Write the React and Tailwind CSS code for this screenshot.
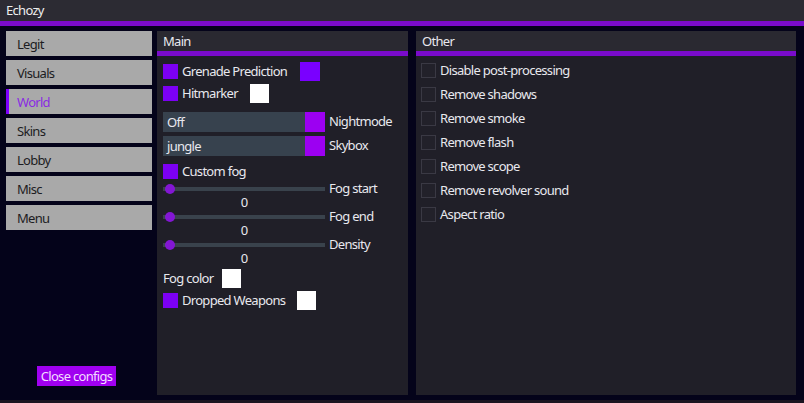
import React from 'react'

const tabs = ['Legit', 'Visuals', 'World', 'Skins', 'Lobby', 'Misc', 'Menu']
const other = [
  'Disable post-processing',
  'Remove shadows',
  'Remove smoke',
  'Remove flash',
  'Remove scope',
  'Remove revolver sound',
  'Aspect ratio',
]

const Check = ({ on }) => (
  <span
    className={`w-[15px] h-[15px] shrink-0 ${on ? 'bg-[#7c00f4]' : 'border border-[#3a3944] bg-[#22212a]'}`}
  />
)

const Swatch = ({ color, className }) => (
  <span className={`w-[19px] h-[19px] shrink-0 ${color} ${className}`} />
)

const Slider = ({ label, top }) => (
  <div className={top}>
    <div className="flex items-center h-[12px]">
      <div className="relative w-[162px] h-[4px] bg-[#39424c]">
        <span className="absolute left-[2px] top-[-3px] w-[10px] h-[10px] rounded-full bg-[#8316d4]" />
      </div>
      <span className="ml-[4px]">{label}</span>
    </div>
    <div className="w-[162px] text-center leading-[14px]">0</div>
  </div>
)

const Combo = ({ value, label, top }) => (
  <div className={`flex items-center h-[20px] ${top}`}>
    <div className="w-[142px] h-full bg-[#37424e] pl-[4px] leading-[20px]">{value}</div>
    <span className="w-[20px] h-full bg-[#9c00f2]" />
    <span className="ml-[4px]">{label}</span>
  </div>
)

const App = () => {
  return (
    <div
      className="w-[804px] h-[403px] bg-[#1a1420] text-[13px] tracking-[-0.7px] text-[#e8e8ee] overflow-hidden whitespace-nowrap"
      style={{ fontFamily: '"Noto Sans", "Open Sans", sans-serif' }}
    >
      {/* title */}
      <div className="h-[21px] bg-[#2c2b33] px-[6px] leading-[21px] text-[#eeeeee]">Echozy</div>
      <div className="h-[5px] bg-[#7a0bcc]" />

      <div className="h-[374px] bg-[#04031a] flex pl-[6px] pr-[8px] py-[5px]">
        {/* sidebar */}
        <div className="w-[146px] flex flex-col gap-[4px]">
          {tabs.map((t) => (
            <div
              key={t}
              className={`h-[25px] bg-[#a9a9a9] leading-[27px] flex ${t === 'World' ? 'text-[#8a2be2]' : 'text-[#1c1c22]'}`}
            >
              {t === 'World' ? (
                <>
                  <span className="w-[3px] h-full bg-[#8000ff]" />
                  <span className="pl-[8px]">{t}</span>
                </>
              ) : (
                <span className="pl-[11px]">{t}</span>
              )}
            </div>
          ))}
          <div className="mt-auto mb-[9px] ml-[31px] w-[79px] h-[20px] bg-[#a000f0] text-[#f3dcff] leading-[20px] text-center">
            Close configs
          </div>
        </div>

        {/* main panel */}
        <div className="ml-[5px] w-[251px] h-full bg-[#201f28] flex flex-col">
          <div className="h-[20px] bg-[#2a2931] pl-[6px] leading-[20px]">Main</div>
          <div className="h-[5px] bg-[#7a0bcc]" />
          <div className="px-[6px]">
            <div className="flex items-center h-[19px] mt-[6px]">
              <Check on />
              <span className="ml-[4px] w-[118px]">Grenade Prediction</span>
              <Swatch color="bg-[#7a00ff]" className="w-[20px]" />
            </div>
            <div className="flex items-center h-[19px] mt-[3px]">
              <Check on />
              <span className="ml-[4px] w-[68px]">Hitmarker</span>
              <Swatch color="bg-white" />
            </div>
            <Combo value="Off" label="Nightmode" top="mt-[9px]" />
            <Combo value="jungle" label="Skybox" top="mt-[4px]" />
            <div className="flex items-center h-[15px] mt-[8px]">
              <Check on />
              <span className="ml-[4px]">Custom fog</span>
            </div>
            <Slider label="Fog start" top="mt-[4px]" />
            <Slider label="Fog end" top="mt-[2px]" />
            <Slider label="Density" top="mt-[2px]" />
            <div className="flex items-center h-[19px] mt-[4px]">
              <span className="w-[59px]">Fog color</span>
              <Swatch color="bg-white" />
            </div>
            <div className="flex items-center h-[19px] mt-[3px]">
              <Check on />
              <span className="ml-[4px] w-[115px]">Dropped Weapons</span>
              <Swatch color="bg-white" />
            </div>
          </div>
        </div>

        {/* other panel */}
        <div className="ml-[8px] flex-1 h-full bg-[#201f28] flex flex-col">
          <div className="h-[20px] bg-[#2a2931] pl-[6px] leading-[20px]">Other</div>
          <div className="h-[5px] bg-[#7a0bcc]" />
          <div className="px-[5px] pt-[7px] flex flex-col gap-[9px]">
            {other.map((o) => (
              <div key={o} className="flex items-center h-[15px]">
                <Check />
                <span className="ml-[4px]">{o}</span>
              </div>
            ))}
          </div>
        </div>
      </div>
    </div>
  )
}

export default App
